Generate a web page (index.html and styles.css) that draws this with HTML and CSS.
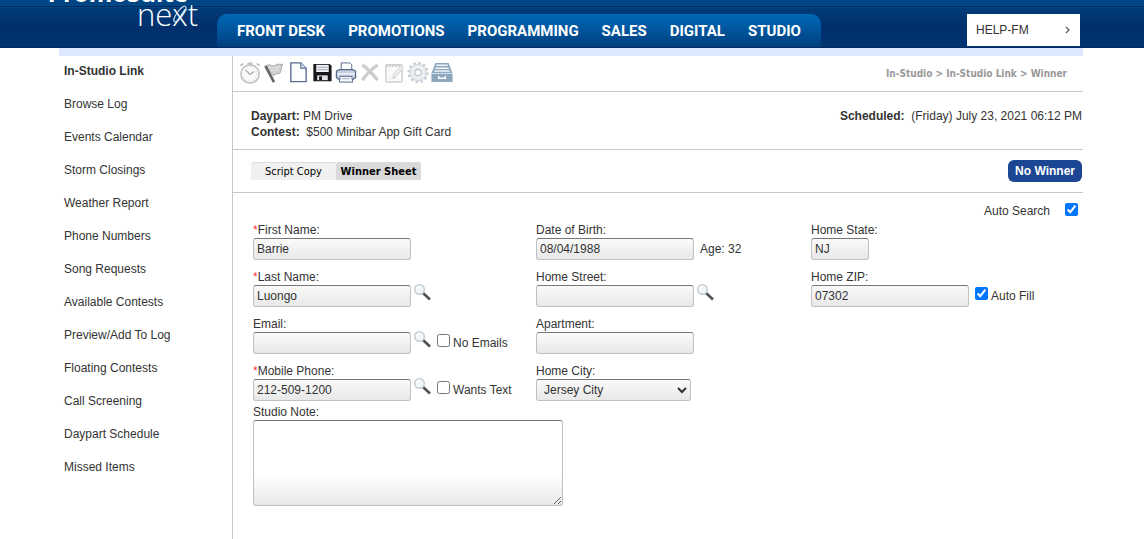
FILE: index.html
```html
<!DOCTYPE html>
<html lang="en">
<head>
<meta charset="utf-8">
<title>Winner Sheet</title>
<link rel="stylesheet" href="styles.css">
</head>
<body>
<svg class="symbols" aria-hidden="true">
  <symbol id="magnifier" viewBox="0 0 18 18">
    <path d="M10 10l7 6.500" stroke="#505050" stroke-width="2.600"/>
    <circle cx="6.500" cy="6.500" r="4.800" fill="#f1f6f9" stroke="#c3ccd2" stroke-width="1.500"/>
    <path d="M4 6a3 3 0 0 1 3-2.500" stroke="#fff" stroke-width="1.500" fill="none"/>
  </symbol>
</svg>
<header class="header">
  <div class="wrap header-inner">
    <div class="logo">
      <span class="logo-main">PromoSuite</span>
      <span class="logo-sub">next<svg viewBox="0 0 18 24" aria-hidden="true"><ellipse cx="9" cy="12" rx="3" ry="9.500" transform="rotate(36 9 12)" fill="none" stroke="#dce6f2" stroke-width="1"/></svg></span>
    </div>
    <nav class="nav">
      <a href="#">FRONT DESK</a>
      <a href="#">PROMOTIONS</a>
      <a href="#">PROGRAMMING</a>
      <a href="#">SALES</a>
      <a href="#">DIGITAL</a>
      <a href="#">STUDIO</a>
    </nav>
    <button class="station" type="button">HELP-FM
      <svg width="6" height="8" viewBox="0 0 6 8" aria-hidden="true"><path d="M1 1l3 3-3 3" fill="none" stroke="#555" stroke-width="1.200"/></svg>
    </button>
  </div>
</header>
<div class="wrap">
<div class="page">
  <aside class="sidebar">
    <a class="current" href="#">In-Studio Link</a>
    <a href="#">Browse Log</a>
    <a href="#">Events Calendar</a>
    <a href="#">Storm Closings</a>
    <a href="#">Weather Report</a>
    <a href="#">Phone Numbers</a>
    <a href="#">Song Requests</a>
    <a href="#">Available Contests</a>
    <a href="#">Preview/Add To Log</a>
    <a href="#">Floating Contests</a>
    <a href="#">Call Screening</a>
    <a href="#">Daypart Schedule</a>
    <a href="#">Missed Items</a>
  </aside>
  <main class="main">
    <div class="toolbar">
      <div class="tools">
        <button type="button" aria-label="Timer"><svg viewBox="0 0 24 24" fill="none" stroke="#c2c2c2"><circle cx="12" cy="13.500" r="9.500" fill="#fafafa" stroke-width="1.700"/><circle cx="12" cy="13.500" r="7" stroke-dasharray="1 2.670"/><path d="M9.500 2.500h5M12 2.500v2M2 5l3-2.500M22 5l-3-2.500" stroke-width="2"/><path d="M12 14L7.500 9.500M12 14l4-3" stroke="#aaa" stroke-width="1.400"/></svg></button>
        <button type="button" aria-label="Flag"><svg viewBox="0 0 24 24" fill="none"><path d="M4 5c4-3 6 2 10-1 3-2 5 1 7-1-2 4-1 7-3 10-3-1-4 2-7 2z" fill="#cfcfcf" stroke="#aaa"/><path d="M6 7c3-1 5 2 12-1M8 10c4 0 5 1 9-1" stroke="#e8e8e8"/><path d="M3 5l9 17" stroke="#666" stroke-width="2.800"/></svg></button>
        <button type="button" aria-label="New"><svg viewBox="0 0 24 24"><path d="M4.500 2H15l5.500 5.500v14h-16z" fill="#fbfdff" stroke="#586b91" stroke-width="1.400"/><path d="M15 2v5.500h5.500" fill="#e2e9f5" stroke="#586b91" stroke-width="1.200"/></svg></button>
        <button type="button" aria-label="Save"><svg viewBox="0 0 24 24"><path d="M3 3h17l2 2v16H3z" fill="#17171b"/><path d="M6 4h13v7.500H6z" fill="#f3f5fa"/><path d="M7 6.500h11M7 9h11" stroke="#9ba4b6"/><path d="M7 15h11v5H7z" fill="#e2e5ec"/><path d="M9 16h3v4H9z" fill="#17171b"/></svg></button>
        <button type="button" aria-label="Print"><svg viewBox="0 0 24 24" stroke="#55678b"><path d="M7 11V2h9l2 2v7" fill="#fff"/><path d="M2 10.500L5 9h14l3 1.500v7l-3 2H5l-3-2z" fill="#c7d0e0" stroke-width="1.300"/><path d="M3 13.500h18" stroke="#f3f6fb" stroke-width="1.500"/><path d="M6 16h12l1 6H5z" fill="#f8faff"/><path d="M8 18.500h8" stroke="#9daac0"/></svg></button>
        <button type="button" aria-label="Delete"><svg viewBox="0 0 24 24"><path d="M4 4c6 4 10 9 16 16M20 4C14 8 9 13 4 20" fill="none" stroke="#cdcdcd" stroke-width="3.500"/></svg></button>
        <button type="button" aria-label="Edit"><svg viewBox="0 0 24 24" fill="none" stroke="#cecece"><rect x="3.500" y="4" width="17" height="18" rx="1.500" fill="#fafafa" stroke-width="1.500"/><path d="M4 5h16" stroke-width="2.500" stroke-dasharray="2 1"/><path d="M7 18h8" stroke="#e1e1e1"/><path d="M11 18l1-5 8-8 2 2-7 8z" fill="#eee"/></svg></button>
        <button type="button" aria-label="Settings"><svg viewBox="0 0 24 24" fill="none"><circle cx="12" cy="12" r="9.700" stroke="#c2c8d0" stroke-width="2.600" stroke-dasharray="2.500 2.579"/><circle cx="12" cy="12" r="6.500" stroke="#eceef1" stroke-width="5"/><circle cx="12" cy="12" r="8.500" stroke="#ced2d8"/><circle cx="12" cy="12" r="3.300" fill="#fff" stroke="#b9c2cd" stroke-width="1.300"/></svg></button>
        <button type="button" aria-label="Archive"><svg viewBox="0 0 24 24"><path d="M5 2h14l4 11v9H1v-9z" fill="#8ca6be"/><path d="M6 4.500h12M5 7.500h14M4 10.500h16" stroke="#f2f6f9" stroke-width="1.500"/><path d="M1.500 13h21" stroke="#dbe5ed"/><path d="M8.500 15.500V18h7v-2.500" fill="none" stroke="#fff" stroke-width="1.500"/></svg></button>
      </div>
      <div class="crumbs">In-Studio &gt; In-Studio Link &gt; Winner</div>
    </div>
    <section class="summary">
      <div><b>Daypart:</b> PM Drive<br><b>Contest:</b>&nbsp; $500 Minibar App Gift Card</div>
      <div><b>Scheduled:</b>&nbsp; (Friday) July 23, 2021 06:12 PM</div>
    </section>
    <section class="actions">
      <div class="tabs">
        <button type="button">Script Copy</button>
        <button type="button" class="active">Winner Sheet</button>
      </div>
      <button type="button" class="primary">No Winner</button>
    </section>
    <form class="form">
      <div class="auto-search"><label for="search">Auto Search</label><input id="search" type="checkbox" checked></div>
      <div class="fields">
        <div class="field">
          <label for="first"><i>*</i>First Name:</label>
          <div class="control"><input id="first" class="box" type="text" value="Barrie"></div>
        </div>
        <div class="field">
          <label for="dob">Date of Birth:</label>
          <div class="control"><input id="dob" class="box" type="text" value="08/04/1988"><span class="age">Age: 32</span></div>
        </div>
        <div class="field">
          <label for="state">Home State:</label>
          <div class="control"><input id="state" class="box short" type="text" value="NJ"></div>
        </div>
        <div class="field">
          <label for="last"><i>*</i>Last Name:</label>
          <div class="control"><input id="last" class="box" type="text" value="Luongo"><button class="find" type="button" aria-label="Search last name"><svg><use href="#magnifier"/></svg></button></div>
        </div>
        <div class="field">
          <label for="street">Home Street:</label>
          <div class="control"><input id="street" class="box" type="text"><button class="find" type="button" aria-label="Search street"><svg><use href="#magnifier"/></svg></button></div>
        </div>
        <div class="field">
          <label for="zip">Home ZIP:</label>
          <div class="control"><input id="zip" class="box" type="text" value="07302"><input id="fill" class="check" type="checkbox" checked><label for="fill">Auto Fill</label></div>
        </div>
        <div class="field">
          <label for="email">Email:</label>
          <div class="control"><input id="email" class="box" type="text"><button class="find" type="button" aria-label="Search email"><svg><use href="#magnifier"/></svg></button><input id="noemail" class="check" type="checkbox"><label for="noemail">No Emails</label></div>
        </div>
        <div class="field wide">
          <label for="apt">Apartment:</label>
          <div class="control"><input id="apt" class="box" type="text"></div>
        </div>
        <div class="field">
          <label for="phone"><i>*</i>Mobile Phone:</label>
          <div class="control"><input id="phone" class="box" type="text" value="212-509-1200"><button class="find" type="button" aria-label="Search phone"><svg><use href="#magnifier"/></svg></button><input id="wants" class="check" type="checkbox"><label for="wants">Wants Text</label></div>
        </div>
        <div class="field wide">
          <label for="city">Home City:</label>
          <div class="control"><select id="city" class="box city"><option>Jersey City</option></select></div>
        </div>
      </div>
      <div class="note"><label for="note">Studio Note:</label><textarea id="note"></textarea></div>
    </form>
  </main>
</div>
</div>
</body>
</html>
```
FILE: styles.css
```css
* { box-sizing: border-box; }
body {
  margin: 0;
  background: #fff;
  color: #333;
  font: 12px/16px "Liberation Sans", Arial, sans-serif;
}
a { color: inherit; text-decoration: none; }
button, input, select, textarea { font: inherit; color: inherit; margin: 0; }
button { border: 0; padding: 0; background: none; cursor: pointer; }
.symbols { position: absolute; width: 0; height: 0; }
.wrap { max-width: 1026px; margin: 0 auto; padding-right: 2px; }

.header {
  height: 48px;
  overflow: hidden;
  border-bottom: 1px solid #002a60;
  background: linear-gradient(#004685 0 6px, #00285f 6px 7px, #004583 7px 8px, #003b78 8px, #002f6c 28px, #003372);
}
.header-inner { display: flex; align-items: flex-end; height: 47px; }
.logo {
  width: 158px;
  padding: 0 19px 24px 0;
  flex: none;
  display: flex;
  flex-direction: column;
  align-items: flex-end;
  color: #fff;
}
.logo-main { font: bold 24px/24px "Open Sans", sans-serif; padding-right: 10px; }
.logo-sub { position: relative; font: 300 31px/18px "Open Sans", sans-serif; }
.logo-sub svg { position: absolute; right: 9px; top: -3px; width: 18px; height: 24px; }
.nav {
  display: flex;
  gap: 23px;
  height: 33px;
  padding: 0 20px;
  border-radius: 10px 10px 0 0;
  background: linear-gradient(#0069b7, #003f7e);
  color: #fff;
  font: bold 15px/34px Roboto, sans-serif;
  white-space: nowrap;
}
.station {
  display: flex;
  justify-content: space-between;
  align-items: center;
  width: 113px;
  height: 32px;
  margin: 0 3px 1px auto;
  padding: 0 9px;
  background: #fff;
}

.page { display: flex; border-top: 8px solid #dbe8ff; }
.sidebar {
  flex: none;
  width: 173px;
  display: flex;
  flex-direction: column;
  gap: 17px;
  padding: 7px 5px 0;
}
.current { font-weight: bold; }
.main { flex: 1; min-height: 483px; border-left: 1px solid #c8c8c8; }
.toolbar, .summary, .actions { display: flex; justify-content: space-between; border-bottom: 1px solid #c8c8c8; }
.toolbar { height: 36px; align-items: center; padding: 0 16px 0 5px; }
.tools { display: flex; padding-bottom: 2px; }
.tools button, .tools svg { display: block; width: 24px; height: 23px; }
.crumbs { color: #999; font: bold 10px/16px "DejaVu Sans Condensed", "DejaVu Sans", sans-serif; }
.summary { padding: 16px 1px 9px 18px; min-height: 58px; }
.actions { height: 43px; align-items: center; padding: 0 1px 0 18px; }
.tabs { display: flex; color: #000; font: 11px/17px "DejaVu Sans Condensed", "DejaVu Sans", sans-serif; }
.tabs button { width: 85px; background: #f0f0f0; border-top: 1px solid #ddd; border-radius: 2px 2px 0 0; white-space: nowrap; }
.tabs .active { background: #d9d9d9; font-weight: bold; }
.primary { padding: 3px 7px; border-radius: 6px; background: #1b4693; color: #fff; font-weight: bold; }

.form { padding: 10px 2px 0 20px; line-height: 15px; }
.auto-search { display: flex; justify-content: flex-end; gap: 15px; padding: 0 3px 4px 0; }
.auto-search label { padding-top: 1px; }
.auto-search input { width: 13px; height: 13px; }
.fields { display: grid; grid-template-columns: 283fr 275fr 270fr; row-gap: 10px; }
.wide { grid-column: 2 / 4; }
.field > label { display: block; }
i { color: #f33; font-style: normal; }
.control { display: flex; align-items: center; height: 22px; }
.box {
  width: 158px;
  height: 22px;
  padding: 0 3px;
  border: 1px solid #c0c0c0;
  border-top-color: #777;
  border-radius: 3px;
  background: linear-gradient(#fafafa, #e8e8e8);
}
.short { width: 58px; }
.city { width: 155px; }
.age { margin-left: 6px; }
.find { align-self: flex-start; margin: -2px 0 0 2px; }
.find svg { display: block; width: 18px; height: 18px; }
.check { width: 13px; height: 13px; margin: 0 3px 5px 6px; }
.note { width: 310px; padding-top: 4px; }
.note label { display: block; }
.note textarea {
  display: block;
  width: 100%;
  height: 86px;
  border: 1px solid #c0c0c0;
  border-top-color: #777;
  border-radius: 3px;
  background: linear-gradient(#fff 65%, #e8e8e8);
}
```
